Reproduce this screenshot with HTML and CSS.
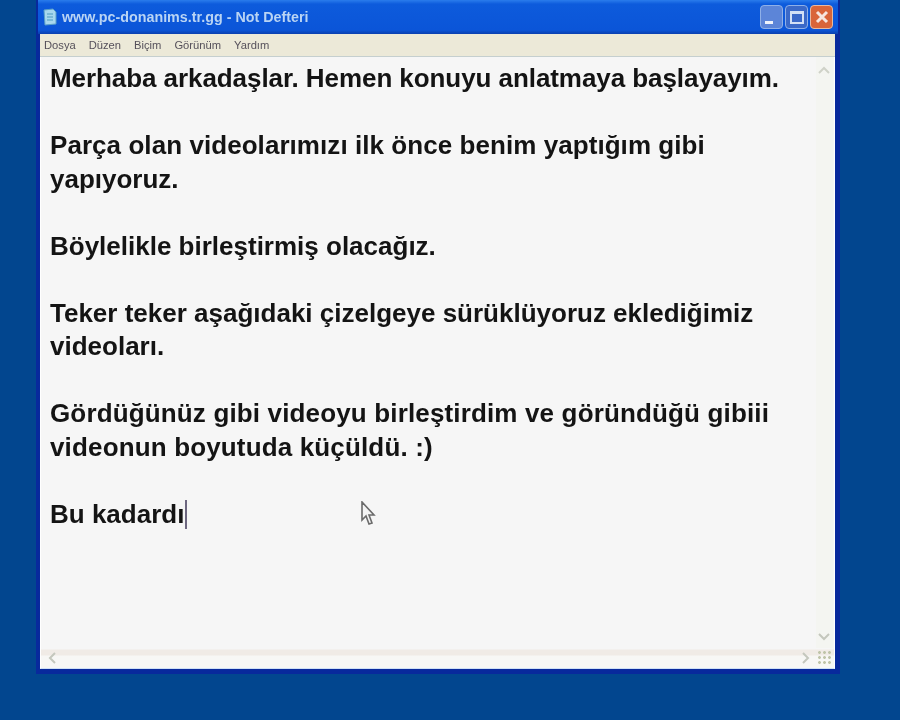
FILE: index.html
```html
<!DOCTYPE html>
<html lang="tr">
<head>
    <meta charset="UTF-8">
    <title>www.pc-donanims.tr.gg - Not Defteri</title>
    <link rel="stylesheet" href="styles.css">
</head>
<body>
    <div class="window">
        <div class="titlebar">
            <svg class="app-icon" width="16" height="18" viewBox="0 0 16 18">
                <path d="M2 2 L11 1 L14 4 L14 16 L3 17 Z" fill="#a8d8ee" stroke="#5aa0c8"/>
                <path d="M5 6 H11 M5 9 H11 M5 12 H11" stroke="#4f9cc0" stroke-width="1"/>
            </svg>
            <span class="title">www.pc-donanims.tr.gg - Not Defteri</span>
            <div class="controls">
                <div class="ctl"><span class="min-glyph"></span></div>
                <div class="ctl dark"><span class="max-glyph"></span></div>
                <div class="ctl close">
                    <svg width="16" height="16" viewBox="0 0 16 16"><path d="M3 3 L13 13 M13 3 L3 13" stroke="#f6e6df" stroke-width="3"/></svg>
                </div>
            </div>
        </div>
        <div class="menubar">
            <span>Dosya</span>
            <span>Düzen</span>
            <span>Biçim</span>
            <span>Görünüm</span>
            <span>Yardım</span>
        </div>
        <div class="client">
            <div class="editor-row">
                <div class="editor"><span class="tight">Merhaba arkadaşlar. Hemen konuyu anlatmaya başlayayım.</span>

<span class="loose">Parça olan videolarımızı ilk önce benim yaptığım gibi</span>
yapıyoruz.

Böylelikle birleştirmiş olacağız.

Teker teker aşağıdaki çizelgeye sürüklüyoruz eklediğimiz
videoları.

<span class="wide">Gördüğünüz gibi videoyu birleştirdim ve göründüğü gibiii</span>
<span class="wide">videonun boyutuda küçüldü. :)</span>

Bu kadardı<span class="caret"></span></div>
                <div class="vscroll">
                    <svg width="16" height="16" viewBox="0 0 16 16"><path d="M3 10 L8 5 L13 10" fill="none" stroke="#cfd2c8" stroke-width="2"/></svg>
                    <svg width="16" height="16" viewBox="0 0 16 16"><path d="M3 6 L8 11 L13 6" fill="none" stroke="#c4c7bd" stroke-width="2"/></svg>
                </div>
            </div>
            <div class="hscroll">
                <svg width="16" height="16" viewBox="0 0 16 16"><path d="M10 3 L5 8 L10 13" fill="none" stroke="#c4c7bd" stroke-width="2"/></svg>
                <svg width="16" height="16" viewBox="0 0 16 16"><path d="M6 3 L11 8 L6 13" fill="none" stroke="#c4c7bd" stroke-width="2"/></svg>
                <div class="grip"></div>
            </div>
        </div>
    </div>

    <svg class="cursor" width="16" height="26" viewBox="0 0 16 26">
        <path d="M2 1 L2 19 L6 15 L9 23 L12 22 L9 14 L14 14 Z" fill="#f4f4f4" stroke="#6b6b6b" stroke-width="1.6"/>
    </svg>
</body>
</html>
```

FILE: styles.css
```css
html, body {
    margin: 0;
    height: 720px;
    overflow: hidden;
}
body {
    position: relative;
    background-color: #02468f;
    font-family: "Liberation Sans", Arial, sans-serif;
}
.window {
    width: 804px;
    height: 674px;
    margin-left: 36px;
    background: #08299c;
    display: flex;
    flex-direction: column;
    box-sizing: border-box;
    padding: 0 5px 5px 4px;
    filter: blur(0.5px);
}
.titlebar {
    height: 34px;
    margin: 0 -3px 0 -2px;
    padding: 0 5px 0 4px;
    background: linear-gradient(#2a7cec, #0d5bdc 12%, #0b55d8 88%, #0a3fae);
    display: flex;
    align-items: center;
    gap: 4px;
}
.title {
    color: #b9d4f4;
    font-size: 14.3px;
    font-weight: bold;
    flex: 1;
}
.controls {
    display: flex;
    gap: 2px;
}
.ctl {
    width: 23px;
    height: 24px;
    box-sizing: border-box;
    border: 1px solid #8fb0e8;
    border-radius: 4px;
    background: #5c85d8;
    display: flex;
    align-items: center;
    justify-content: center;
}
.dark {
    background: #3b69c8;
}
.close {
    background: #d9653a;
    border-color: #e8b9a0;
}
.min-glyph {
    width: 8px;
    height: 3px;
    background: #eef3fb;
    margin: 10px 6px 0 0;
}
.max-glyph {
    width: 10px;
    height: 8px;
    border: 2px solid #d3e0f5;
    border-top-width: 3px;
}
.menubar {
    height: 23px;
    background: #ece9d8;
    border-bottom: 1px solid #c5cfcf;
    padding-left: 4px;
    display: flex;
    align-items: center;
    gap: 13px;
    font-size: 11.2px;
    color: #55505a;
    box-sizing: border-box;
}
.client {
    flex: 1;
    background: #f6f6f6;
    border-left: 1px solid #fff;
    border-right: 1px solid #fff;
    border-bottom: 1px solid #cfe0f6;
    display: flex;
    flex-direction: column;
    min-height: 0;
}
.editor-row {
    flex: 1;
    display: flex;
    min-height: 0;
}
.editor {
    flex: 1;
    padding: 5px 0 0 9px;
    font-size: 26px;
    font-weight: bold;
    line-height: 33.5px;
    color: #141414;
    white-space: pre-wrap;
}
/* line widths drift in the original, these pull them back in */
.tight {
    letter-spacing: -0.07px;
}
.loose {
    letter-spacing: 0.06px;
}
.wide {
    letter-spacing: 0.15px;
}
.caret {
    display: inline-block;
    width: 2px;
    height: 29px;
    margin-left: 1px;
    background: #6d6780;
    vertical-align: -6px;
}
.vscroll {
    width: 17px;
    margin-right: 1px;
    background: #f4f5f1;
    display: flex;
    flex-direction: column;
    justify-content: space-between;
    padding: 6px 0 4px;
}
.hscroll {
    height: 20px;
    background: linear-gradient(#f6f6f6 0, #f6f6f6 1px, #f0ebe6 2px, #f0ebe6 7px, #f7f7f5 8px);
    display: flex;
    align-items: center;
    padding-left: 4px;
}
.hscroll svg:nth-child(2) {
    margin-left: auto;
}
.grip {
    width: 16px;
    height: 16px;
    margin: 0 1px 0 4px;
    background: radial-gradient(#bfc4a8 1.2px, transparent 1.6px) 0 0 / 5px 5px;
}
.cursor {
    position: absolute;
    left: 360px;
    top: 501px;
}
```
